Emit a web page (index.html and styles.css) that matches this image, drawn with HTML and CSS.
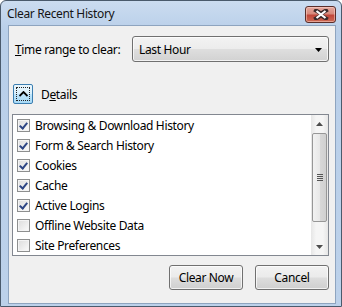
FILE: index.html
```html
<!DOCTYPE html>
<html>
<head>
<meta charset="utf-8">
<link rel="stylesheet" href="styles.css">
</head>
<body>
<div class="window">
  <div class="titlebar">
    <span class="title">Clear Recent History</span>
    <div class="close">
      <svg width="16" height="11" viewBox="0 0 16 11"><path d="M3 1.5 L8 4.5 L13 1.5 M3 9.5 L8 6.5 L13 9.5" stroke="#3a2a2a" stroke-width="4" fill="none" stroke-linecap="square"/><path d="M3.5 2 L12.5 9 M12.5 2 L3.5 9" stroke="#fff" stroke-width="2.2" fill="none"/></svg>
    </div>
  </div>
  <div class="content">
    <div class="range-row">
      <span class="label"><u>T</u>ime range to clear:</span>
      <div class="select">
        <span>Last Hour</span>
        <svg class="sel-arrow" width="7" height="4" viewBox="0 0 7 4"><path d="M0 0 H7 L3.5 4 Z" fill="#000"/></svg>
      </div>
    </div>
    <div class="details-row">
      <div class="details-btn">
        <div class="focus">
          <svg width="9" height="6" viewBox="0 0 9 6"><path d="M0.5 5 L4.5 1 L8.5 5" stroke="#000" stroke-width="1.8" fill="none"/></svg>
        </div>
      </div>
      <span class="details-label">D<u>e</u>tails</span>
    </div>
    <div class="listbox">
      <div class="items">
        <div class="item"><span class="cb checked"></span>Browsing &amp; Download History</div>
        <div class="item"><span class="cb checked"></span>Form &amp; Search History</div>
        <div class="item"><span class="cb checked"></span>Cookies</div>
        <div class="item"><span class="cb checked"></span>Cache</div>
        <div class="item"><span class="cb checked"></span>Active Logins</div>
        <div class="item"><span class="cb"></span>Offline Website Data</div>
        <div class="item"><span class="cb"></span>Site Preferences</div>
      </div>
      <div class="scrollbar">
        <div class="sb-btn"><svg width="7" height="4" viewBox="0 0 7 4"><path d="M3.5 0 L7 4 H0 Z" fill="#4d4d4d"/></svg></div>
        <div class="sb-track">
          <div class="thumb"><div class="grip"></div></div>
        </div>
        <div class="sb-btn"><svg width="7" height="4" viewBox="0 0 7 4"><path d="M0 0 H7 L3.5 4 Z" fill="#4d4d4d"/></svg></div>
      </div>
    </div>
    <div class="buttons">
      <div class="btn">Clear Now</div>
      <div class="btn">Cancel</div>
    </div>
  </div>
</div>
</body>
</html>
```
FILE: styles.css
```css
* { box-sizing: border-box; }
html, body { margin: 0; padding: 0; background: #fff; }
body { font-family: "Noto Sans", "Open Sans", sans-serif; font-size: 12px; letter-spacing: -0.35px; color: #000; }
.window {
  width: 342px; height: 307px;
  border: 1px solid #4a5a6c;
  border-radius: 6px 6px 0 0;
  background: linear-gradient(#cbdcf0, #b9cfe9 30px, #bcd1ea);
  display: flex; flex-direction: column;
  padding: 0 5px 2px 7px;
}
.titlebar {
  height: 24px; flex: none;
  display: flex; align-items: flex-start; justify-content: space-between;
}
.title { font-size: 12px; color: #141414; margin-top: 4px; margin-left: -1px; }
.close {
  width: 31px; height: 17px; margin-top: 5px; margin-right: 0px;
  border: 1px solid #5a2e2a; border-radius: 3px;
  background: linear-gradient(#e4a79c, #d88a7c 45%, #c1473a 55%, #cc6a55);
  box-shadow: inset 0 0 0 1px rgba(255,220,210,0.5);
  display: flex; align-items: center; justify-content: center;
}
.content {
  flex: 1;
  background: #f0f0f0;
  border: 1px solid #8ea4bf;
  padding: 10px 6px 0 2px;
  display: flex; flex-direction: column;
}
.range-row { display: flex; align-items: center; height: 26px; }
.label { width: 121px; padding-left: 4px; }
.select {
  flex: 1; height: 26px;
  border: 1px solid #707070; border-radius: 3px;
  background: linear-gradient(#f3f3f3, #ececec 48%, #dedede 52%, #d2d2d2);
  box-shadow: inset 0 0 0 1px rgba(255,255,255,0.7);
  display: flex; align-items: center; justify-content: space-between;
  padding: 0 6px 0 6px;
}
.sel-arrow { margin-top: 1px; }
.details-row { display: flex; align-items: center; margin-top: 22px; height: 20px; }
.details-btn {
  width: 20px; height: 20px; margin-left: 2px;
  border: 1px solid #3c7fb1; border-radius: 2px;
  background: linear-gradient(#eaf6fd, #d9f0fc 48%, #bee6fd 52%, #a7d9f5);
  padding: 2px;
}
.focus {
  width: 100%; height: 100%;
  border: 1px dotted #222;
  display: flex; align-items: center; justify-content: center;
}
.details-label { margin-left: 8px; }
.listbox {
  margin-top: 10px; margin-left: 1px;
  height: 142px;
  border: 1px solid #828790;
  background: #fff;
  display: flex;
}
.items { flex: 1; }
.item { height: 20px; display: flex; align-items: center; padding-left: 4px; white-space: nowrap; }
.cb {
  width: 13px; height: 13px; margin-right: 5px;
  border: 1px solid #8e8f8f;
  background: linear-gradient(135deg, #dcdcdc, #fbfbfb);
  box-shadow: inset 0 0 0 1px #f4f4f4;
  position: relative; flex: none;
}
.cb.checked::after {
  content: ""; position: absolute;
  left: 3px; top: 1px; width: 3px; height: 6px;
  border: solid #2c4584; border-width: 0 2px 2px 0;
  transform: rotate(40deg);
}
.scrollbar {
  width: 17px; display: flex; flex-direction: column;
  background: linear-gradient(90deg, #e6e6e6, #f5f5f5 30%, #f5f5f5 70%, #e6e6e6);
}
.sb-btn { height: 17px; display: flex; align-items: center; justify-content: center; }
.sb-track { flex: 1; padding-top: 1px; }
.thumb {
  height: 89px; margin: 0 1px;
  border: 1px solid #979797; border-radius: 2px;
  background: linear-gradient(90deg, #f2f2f2, #e8e8e8 50%, #d8d8d8 51%, #d0d0d0);
  display: flex; align-items: center; justify-content: center;
}
.grip {
  width: 6px; height: 7px;
  background: repeating-linear-gradient(#555 0 1px, transparent 1px 2px);
}
.buttons { display: flex; justify-content: flex-end; gap: 12px; margin-top: 9px; }
.btn {
  width: 74px; height: 25px;
  border: 1px solid #707070; border-radius: 3px;
  background: linear-gradient(#f2f2f2, #ebebeb 48%, #dddddd 52%, #cfcfcf);
  box-shadow: inset 0 0 0 1px rgba(255,255,255,0.7);
  display: flex; align-items: center; justify-content: center;
}
```
